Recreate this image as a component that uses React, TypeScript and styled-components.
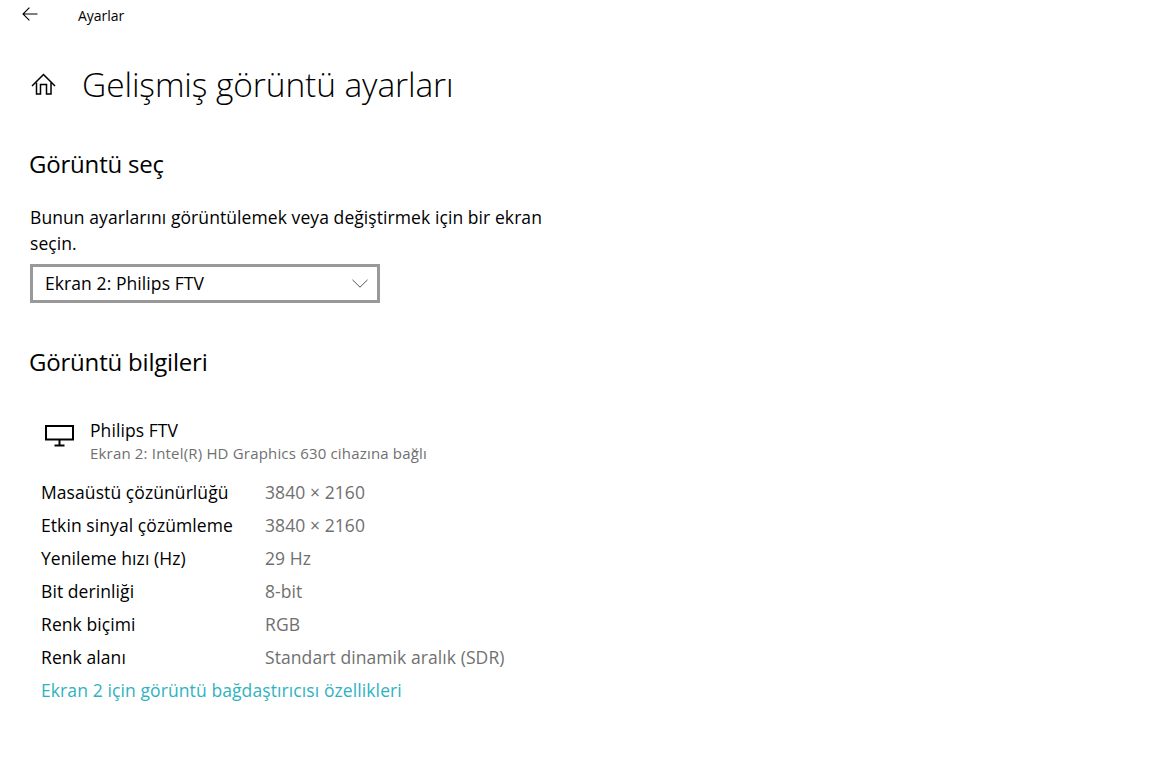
import { Fragment } from 'react';
import styled, { createGlobalStyle } from 'styled-components';

const GlobalStyle = createGlobalStyle`
  html, body {
    margin: 0;
    padding: 0;
    background: #fff;
  }
  body {
    font-family: 'Open Sans', 'Noto Sans', sans-serif;
    color: #000;
  }
`;

const Page = styled.div`
  width: 1152px;
  height: 761px;
  overflow: hidden;
  background: #fff;
`;

// top bar with back arrow
const TitleBar = styled.div`
  display: flex;
  align-items: center;
  height: 30px;
`;

const BackButton = styled.div`
  display: flex;
  justify-content: center;
  width: 78px;
  padding: 0 19px 2px 0;
  box-sizing: border-box;
`;

const AppName = styled.span`
  font-size: 14px;
  letter-spacing: -0.05px;
`;

// page heading
const Heading = styled.div`
  display: flex;
  align-items: center;
  height: 44px;
  margin-top: 32px;
  padding-left: 31px;
`;

const HomeIcon = styled.svg`
  width: 25px;
  height: 25px;
  margin-right: 26px;
  flex: none;
`;

const PageTitle = styled.h1`
  margin: 0;
  font-size: 33.5px;
  font-weight: 300;
  letter-spacing: -0.1px;
  white-space: nowrap;
`;

const Section = styled.section`
  padding-left: 29px;
`;

const SectionTitle = styled.h2<{ $top: number }>`
  margin: ${(p) => p.$top}px 0 0;
  font-size: 24px;
  line-height: 30px;
  font-weight: 400;
  letter-spacing: -0.2px;
`;

const Description = styled.p`
  width: 530px;
  margin: 25px 0 0 1px;
  font-size: 17.5px;
  line-height: 26px;
  letter-spacing: 0.08px;
`;

const Select = styled.div`
  display: flex;
  align-items: center;
  justify-content: space-between;
  width: 350px;
  height: 39px;
  margin: 8px 0 0 1px;
  padding: 0 9px 2px 12px;
  box-sizing: border-box;
  border: 3px solid #999;
  font-size: 17.5px;
  letter-spacing: 0.08px;
`;

const Chevron = styled.svg`
  width: 16px;
  height: 9px;
  margin-top: 2px;
  flex: none;
`;

const DeviceRow = styled.div`
  display: flex;
  margin: 40px 0 0 16px;
`;

const MonitorIcon = styled.svg`
  width: 29px;
  height: 22px;
  margin: 8px 16px 0 0;
  flex: none;
`;

const DeviceText = styled.div`
  display: flex;
  flex-direction: column;
`;

const DeviceName = styled.span`
  font-size: 17.5px;
  line-height: 26px;
  letter-spacing: 0.08px;
`;

const DeviceSub = styled.span`
  font-size: 15px;
  line-height: 20px;
  letter-spacing: 0.18px;
  color: #707070;
`;

const InfoGrid = styled.dl`
  display: grid;
  grid-template-columns: 224px 1fr;
  grid-auto-rows: 33px;
  align-items: center;
  margin: 12px 0 0 12px;
  font-size: 17.5px;
  letter-spacing: 0.08px;
`;

const InfoLabel = styled.dt`
  margin: 0;
`;

const InfoValue = styled.dd`
  margin: 0;
  color: #707070;
`;

const AdapterLink = styled.a`
  display: block;
  margin: 1px 0 0 12px;
  font-size: 17.5px;
  line-height: 33px;
  letter-spacing: 0.1px;
  color: #2fb2c0;
`;

const rows: [string, string][] = [
  ['Masaüstü çözünürlüğü', '3840 × 2160'],
  ['Etkin sinyal çözümleme', '3840 × 2160'],
  ['Yenileme hızı (Hz)', '29 Hz'],
  ['Bit derinliği', '8-bit'],
  ['Renk biçimi', 'RGB'],
  ['Renk alanı', 'Standart dinamik aralık (SDR)'],
];

const App = () => (
  <Page>
    <GlobalStyle />
    <TitleBar>
      <BackButton>
        <svg width="16" height="14" viewBox="0 0 16 14" fill="none" stroke="#000" strokeWidth="1.1">
          <path d="M15.5 7H1M7.4.6 1 7l6.4 6.4" />
        </svg>
      </BackButton>
      <AppName>Ayarlar</AppName>
    </TitleBar>
    <Heading>
      <HomeIcon viewBox="0 0 25 25" fill="none" stroke="#000" strokeWidth="1.5">
        <path d="M1 14 12.5 2.5 24 14" />
        <path d="M5.5 10.5V22h4v-9.5h6V22h4.5V10.5" />
      </HomeIcon>
      <PageTitle>Gelişmiş görüntü ayarları</PageTitle>
    </Heading>
    <Section>
      <SectionTitle $top={43}>Görüntü seç</SectionTitle>
      <Description>Bunun ayarlarını görüntülemek veya değiştirmek için bir ekran seçin.</Description>
      <Select>
        Ekran 2: Philips FTV
        <Chevron viewBox="0 0 16 9" fill="none" stroke="#555" strokeWidth="1">
          <path d="M.5.8 8 8.2 15.5.8" />
        </Chevron>
      </Select>
      <SectionTitle $top={44}>Görüntü bilgileri</SectionTitle>
      <DeviceRow>
        <MonitorIcon viewBox="0 0 29 22" fill="none" stroke="#000" strokeWidth="2">
          <path d="M1 1h27v13.5H1z" />
          <path d="M14.5 15v6" />
          <path d="M9.5 20.5h10" />
        </MonitorIcon>
        <DeviceText>
          <DeviceName>Philips FTV</DeviceName>
          <DeviceSub>Ekran 2: Intel(R) HD Graphics 630 cihazına bağlı</DeviceSub>
        </DeviceText>
      </DeviceRow>
      <InfoGrid>
        {rows.map(([label, value]) => (
          <Fragment key={label}>
            <InfoLabel>{label}</InfoLabel>
            <InfoValue>{value}</InfoValue>
          </Fragment>
        ))}
      </InfoGrid>
      <AdapterLink>Ekran 2 için görüntü bağdaştırıcısı özellikleri</AdapterLink>
    </Section>
  </Page>
);

export default App;
